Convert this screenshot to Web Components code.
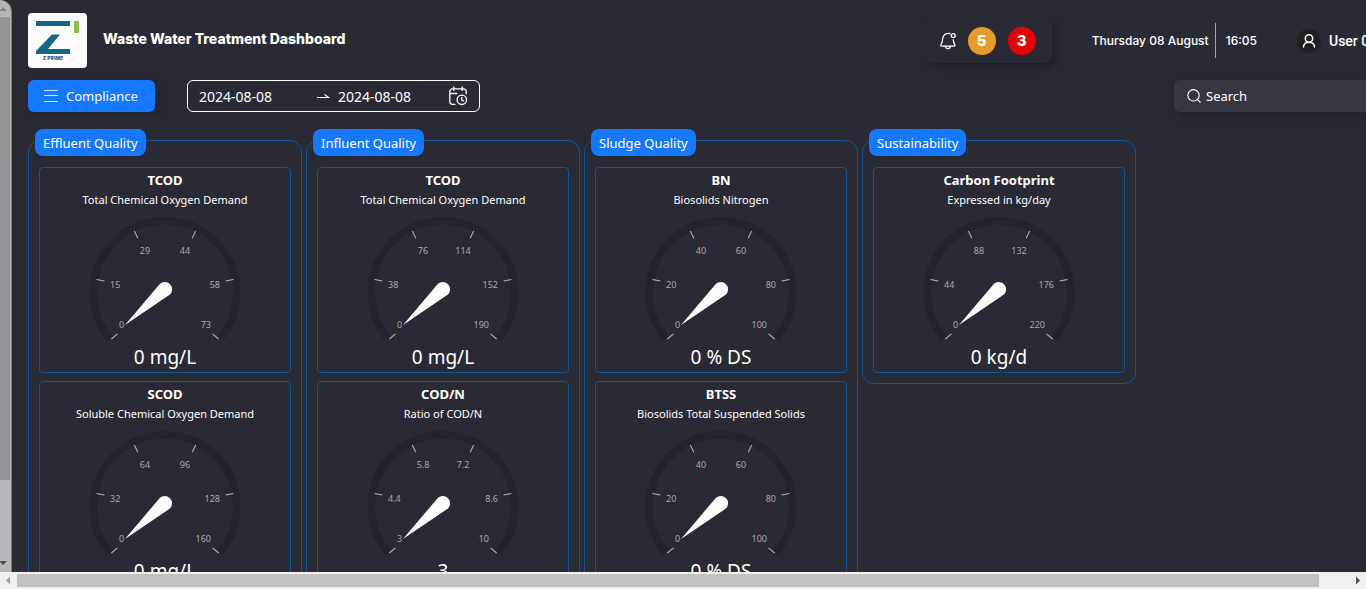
<!DOCTYPE html>
<html lang="en">
<head>
<meta charset="utf-8">
<title>Waste Water Treatment Dashboard</title>
<style>
  html, body { height: 100%; margin: 0; }
  body {
    background: #2a2a34; color: #fff; overflow: hidden;
    font-family: "Noto Sans", "Open Sans", sans-serif; font-size: 14px;
    --display: Inter, Roboto, sans-serif;
    --blue: #1677ff; --line: #10549a; --panel: #2a2a34;
  }
</style>
</head>
<body>
<app-shell>
  <app-header slot="header"></app-header>
  <filter-bar slot="filters"></filter-bar>
  <kpi-section heading="Effluent Quality">
    <kpi-gauge heading="TCOD" detail="Total Chemical Oxygen Demand" value="0 mg/L" scale="0,15,29,44,58,73"></kpi-gauge>
    <kpi-gauge heading="SCOD" detail="Soluble Chemical Oxygen Demand" value="0 mg/L" scale="0,32,64,96,128,160"></kpi-gauge>
  </kpi-section>
  <kpi-section heading="Influent Quality">
    <kpi-gauge heading="TCOD" detail="Total Chemical Oxygen Demand" value="0 mg/L" scale="0,38,76,114,152,190"></kpi-gauge>
    <kpi-gauge heading="COD/N" detail="Ratio of COD/N" value="3" scale="3,4.4,5.8,7.2,8.6,10"></kpi-gauge>
  </kpi-section>
  <kpi-section heading="Sludge Quality">
    <kpi-gauge heading="BN" detail="Biosolids Nitrogen" value="0 % DS" scale="0,20,40,60,80,100"></kpi-gauge>
    <kpi-gauge heading="BTSS" detail="Biosolids Total Suspended Solids" value="0 % DS" scale="0,20,40,60,80,100"></kpi-gauge>
  </kpi-section>
  <kpi-section heading="Sustainability">
    <kpi-gauge heading="Carbon Footprint" detail="Expressed in kg/day" value="0 kg/d" scale="0,44,88,132,176,220"></kpi-gauge>
  </kpi-section>
</app-shell>

<script>
class BaseElement extends HTMLElement {
  connectedCallback() {
    if (this.shadowRoot) return;
    this.attachShadow({ mode: 'open' }).innerHTML =
      '<style>*{box-sizing:border-box}' + this.styles() + '</style>' + this.markup();
  }
}

customElements.define('app-shell', class extends BaseElement {
  styles() { return `
    :host { display: flex; flex-direction: column; height: 100vh; }
    .view { flex: 1; min-height: 0; display: flex; overflow: hidden; }
    main { flex: 1; min-width: 0; }
    .page { width: calc(100% + 32px); padding: 13px 16px 0; }
    .sections { display: grid; grid-template-columns: repeat(4, 274px); gap: 4px; align-items: start; margin-top: 28px; }
  `; }
  markup() { return `
    <div class="view">
      <scroll-bar dir="vertical"></scroll-bar>
      <main><div class="page">
        <slot name="header"></slot>
        <slot name="filters"></slot>
        <div class="sections"><slot></slot></div>
      </div></main>
    </div>
    <scroll-bar dir="horizontal"></scroll-bar>
  `; }
});

customElements.define('scroll-bar', class extends BaseElement {
  styles() { return this.getAttribute('dir') === 'vertical' ? `
    :host { display: flex; flex-direction: column; width: 12px; background: #b6b7ba; border-right: 1px solid #7b7c80; border-top-right-radius: 12px; overflow: hidden; }
    svg { display: block; width: 11px; height: 17px; flex: none; }
    .track { flex: 1; }
    .thumb { width: 10px; height: 86%; background: #949598; }
  ` : `
    :host { display: flex; height: 17px; background: #f0f0f0; flex: none; }
    svg { display: block; width: 17px; height: 17px; flex: none; }
    .track { flex: 1; padding: 2px 30px 2px 0; }
    .thumb { height: 13px; background: #c1c1c1; }
  `; }
  markup() { return this.getAttribute('dir') === 'vertical' ? `
    <svg viewBox="0 0 11 17"><path d="M-1 11 3 7l4 4z" fill="#838487"/></svg>
    <div class="track"><div class="thumb"></div></div>
    <svg viewBox="0 0 11 17"><path d="M-1 6h8l-4 4z" fill="#4b4c4e"/></svg>
  ` : `
    <svg viewBox="0 0 17 17"><path d="M10 4.500v8l-4-4z" fill="#a0a0a0"/></svg>
    <div class="track"><div class="thumb"></div></div>
    <svg viewBox="0 0 17 17"><path d="M7 4.500v8l4-4z" fill="#505050"/></svg>
  `; }
});

customElements.define('app-header', class extends BaseElement {
  styles() { return `
    :host { display: flex; align-items: center; height: 55px; font-family: var(--display); }
    .logo { width: 59px; height: 55px; display: block; flex: none; }
    h1 { flex: 1; margin: 0 0 4px 16px; font-size: 14px; line-height: 20px; font-weight: 800; }
    .alerts { display: flex; align-items: center; gap: 12px; height: 44px; padding: 0 16px; border-radius: 8px; box-shadow: 4px 4px 10px #1f1f24; background: var(--panel); }
    .alerts svg { width: 16px; height: 18px; display: block; }
    .count { width: 28px; height: 28px; border-radius: 50%; display: grid; place-items: center; font-size: 15px; font-weight: 800; line-height: 20px; background: #e69b2a; }
    .count + .count { background: #e00508; }
    .date { margin-left: 40px; display: flex; align-items: center; font-size: 12px; font-weight: 500; line-height: 16px; }
    .date span { padding-right: 6px; }
    .date time { border-left: 1px solid #a3a3a5; padding-left: 10px; line-height: 35px; }
    .user { display: flex; align-items: center; gap: 8px; width: 85px; margin-left: 40px; font-family: Roboto, sans-serif; font-size: 14px; font-weight: 500; line-height: 20px; color: inherit; text-decoration: none; white-space: nowrap; }
    .user svg { width: 24px; height: 24px; display: block; flex: none; }
  `; }
  markup() { return `
    <svg class="logo" viewBox="0 0 59 55" role="img" aria-label="Z Prime">
      <rect width="59" height="55" rx="4" fill="#fcfcfc"/>
      <path d="M8 8h34v5H8zM24 21.500h8L20 36h22v5H8v-3z" fill="#146684"/>
      <rect x="46" y="8" width="5" height="12" fill="#86c440"/>
      <text x="25" y="47" font-size="5" font-weight="800" text-anchor="middle" fill="#146684">Z PRIME</text>
    </svg>
    <h1>Waste Water Treatment Dashboard</h1>
    <div class="alerts">
      <svg viewBox="0 0 16 18" fill="none" stroke="#fff" stroke-width="1.300" stroke-linecap="round" stroke-linejoin="round">
        <path d="M9.800 1.500C5.800.800 3 3 2.700 6.500c-.2 3-.5 4.300-1.700 6-.5.8-.2 1.600.7 1.600h12.200c.9 0 1.300-.8.8-1.600-.9-1.500-1.300-2.700-1.400-4.600"/>
        <path d="M5.500 14.500c.5 2.900 4.300 2.900 4.900 0"/><circle cx="13.200" cy="3.600" r="2"/>
      </svg>
      <span class="count">5</span><span class="count">3</span>
    </div>
    <div class="date"><span>Thursday 08 August</span><time>16:05</time></div>
    <a class="user" href="#user">
      <svg viewBox="0 0 24 24" fill="none" stroke="#fff" stroke-width="1.500" stroke-linecap="round">
        <circle cx="12" cy="12" r="12" fill="#1f1f26" stroke="none"/>
        <circle cx="12" cy="9.500" r="3.700"/><path d="M6.500 18c.2-6.300 10.800-6.300 11 0"/>
      </svg>User 01</a>
  `; }
});

customElements.define('filter-bar', class extends BaseElement {
  styles() { return `
    :host { display: flex; align-items: center; height: 32px; margin-top: 12px; }
    button, input { font: inherit; color: inherit; border: 0; padding: 0; background: none; outline: 0; }
    .menu { display: flex; align-items: center; gap: 8px; width: 127px; height: 32px; padding: 0 16px; border-radius: 6px; background: var(--blue); font-size: 13px; line-height: 20px; box-shadow: 3px 3px 10px #1f232d; }
    svg { display: block; flex: none; }
    .range { display: flex; align-items: center; width: 293px; height: 32px; margin: 0 auto 0 32px; padding: 0 11px; border: 1px solid #fff; border-radius: 6px; }
    .range input { width: 117px; height: 20px; }
    .range input:nth-of-type(2) { width: 102px; margin-left: 8px; }
    .range .cal { margin-left: auto; }
    .search { display: flex; align-items: center; gap: 5px; width: 208px; height: 32px; padding: 0 13px; border-radius: 6px; background: #373641; box-shadow: 4px 4px 10px #1f1f24; font-size: 13px; }
    .search input { flex: 1; min-width: 0; height: 20px; }
    .search input::placeholder { color: #fff; opacity: 1; }
  `; }
  markup() { return `
    <button class="menu" type="button">
      <svg width="14" height="14" viewBox="0 0 14 14" stroke="#fff" stroke-opacity=".8"><path d="M0 1.500h14M0 6.500h14M0 12.500h14"/></svg>Compliance</button>
    <div class="range">
      <input aria-label="Start date" value="2024-08-08">
      <svg width="14" height="10" viewBox="0 0 14 10" fill="none" stroke="#fff" stroke-width="1.200"><path d="M1 6.500h11.500L8.500 3.400"/></svg>
      <input aria-label="End date" value="2024-08-08">
      <svg class="cal" width="20" height="20" viewBox="0 0 20 20" fill="none" stroke="#fff" stroke-width="1.300" stroke-linecap="round" stroke-linejoin="round">
        <path d="M7 18.300H4.500A2.700 2.700 0 0 1 1.800 15.600V5.500A2.700 2.700 0 0 1 4.500 2.800h11a2.700 2.700 0 0 1 2.700 2.700v2.200M1.800 7.500h7M5.800 1v3.400M14.200 1v3.400"/>
        <circle cx="13.800" cy="13.800" r="4.700"/><path d="M13.800 11.400v2.800l1.600.6"/>
      </svg>
    </div>
    <label class="search">
      <svg width="14" height="14" viewBox="0 0 14 14" fill="none" stroke="#fff" stroke-width="1.100"><circle cx="6.500" cy="6.300" r="5.700"/><path d="m10.500 10.500 3 3"/></svg>
      <input type="search" aria-label="Search" placeholder="Search">
    </label>
  `; }
});

customElements.define('kpi-section', class extends BaseElement {
  styles() { return `
    :host { display: block; border: 1px solid var(--line); border-radius: 12px; padding: 0 10px 10px; }
    h2 { width: fit-content; margin: -12px 0 11px -4px; padding: 2px 8px 0; border-radius: 8px; background: var(--blue); font-size: 13px; line-height: 25px; font-weight: 400; }
    .cards { display: grid; gap: 8px; }
  `; }
  markup() { return `<h2>${this.getAttribute('heading')}</h2><div class="cards"><slot></slot></div>`; }
});

customElements.define('kpi-gauge', class extends BaseElement {
  styles() { return `
    :host { display: flex; flex-direction: column; align-items: center; border: 1px solid var(--line); border-radius: 4px; text-align: center; }
    h3 { margin: 0; font-size: 13px; line-height: 24px; font-weight: 700; }
    p { margin: 0; font-size: 11px; line-height: 16px; }
    svg { display: block; width: 160px; height: 134px; font-size: 9px; }
    output { font-size: 19px; line-height: 30px; }
  `; }
  markup() {
    const labels = this.getAttribute('scale').split(',');
    const spots = [[34, 120, 'start'], [25, 80, 'start'], [60, 46, 'middle'], [100, 46, 'middle'], [135, 80, 'end'], [126, 120, 'end']];
    const texts = labels.map((t, i) =>
      `<text x="${spots[i][0]}" y="${spots[i][1]}" text-anchor="${spots[i][2]}">${t}</text>`).join('');
    const ticks = labels.map((_, i) =>
      `<path d="M10 86h8" transform="rotate(${i * 52 - 40} 80 86)"/>`).join('');
    return `
      <h3>${this.getAttribute('heading')}</h3>
      <p>${this.getAttribute('detail')}</p>
      <svg viewBox="0 0 160 134">
        <path d="M25 130.600A71.750 71.750 0 1 1 135 130.600" fill="none" stroke="#23232b" stroke-width="7.500"/>
        <g stroke="#b4b4b8">${ticks}</g>
        <g fill="#a9a9ad">${texts}</g>
        <path d="M40 117 75 75.700A7.300 7.300 0 1 1 84.600 86.700Z" fill="#fcfcfc"/>
      </svg>
      <output>${this.getAttribute('value')}</output>`;
  }
});
</script>
</body>
</html>
